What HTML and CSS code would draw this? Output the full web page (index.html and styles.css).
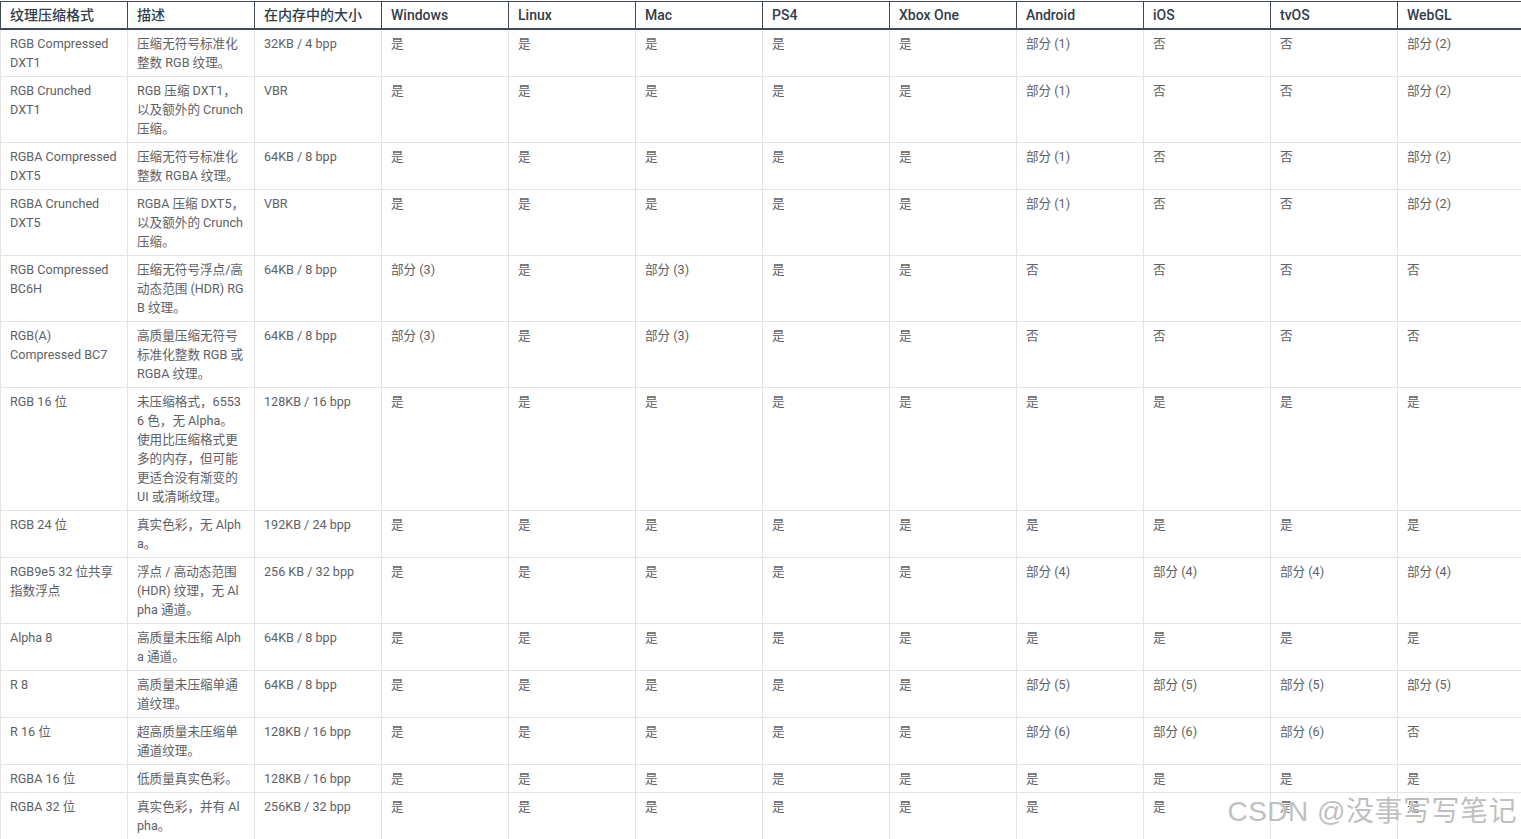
FILE: index.html
```html
<!DOCTYPE html>
<html lang="zh-CN">
<head>
<meta charset="utf-8">
<title>纹理压缩格式</title>
<link rel="stylesheet" href="styles.css">
</head>
<body>
<div class="page">
<table class="fmt">
<colgroup>
<col class="c"><col class="c"><col class="c"><col class="c"><col class="c"><col class="c"><col class="c"><col class="c"><col class="c"><col class="c"><col class="c"><col class="c">
</colgroup>
<thead>
<tr><th>纹理压缩格式</th><th>描述</th><th>在内存中的大小</th><th>Windows</th><th>Linux</th><th>Mac</th><th>PS4</th><th>Xbox One</th><th>Android</th><th>iOS</th><th>tvOS</th><th>WebGL</th></tr>
</thead>
<tbody>
<tr><td>RGB Compressed DXT1</td><td class="d">压缩无符号标准化整数 RGB 纹理。</td><td>32KB / 4 bpp</td><td>是</td><td>是</td><td>是</td><td>是</td><td>是</td><td>部分 (1)</td><td>否</td><td>否</td><td>部分 (2)</td></tr>
<tr><td>RGB Crunched DXT1</td><td class="d">RGB 压缩 DXT1，以及额外的 Crunch 压缩。</td><td>VBR</td><td>是</td><td>是</td><td>是</td><td>是</td><td>是</td><td>部分 (1)</td><td>否</td><td>否</td><td>部分 (2)</td></tr>
<tr><td>RGBA Compressed DXT5</td><td class="d">压缩无符号标准化整数 RGBA 纹理。</td><td>64KB / 8 bpp</td><td>是</td><td>是</td><td>是</td><td>是</td><td>是</td><td>部分 (1)</td><td>否</td><td>否</td><td>部分 (2)</td></tr>
<tr><td>RGBA Crunched DXT5</td><td class="d">RGBA 压缩 DXT5，以及额外的 Crunch 压缩。</td><td>VBR</td><td>是</td><td>是</td><td>是</td><td>是</td><td>是</td><td>部分 (1)</td><td>否</td><td>否</td><td>部分 (2)</td></tr>
<tr><td>RGB Compressed BC6H</td><td class="d">压缩无符号浮点/高动态范围 (HDR) RGB 纹理。</td><td>64KB / 8 bpp</td><td>部分 (3)</td><td>是</td><td>部分 (3)</td><td>是</td><td>是</td><td>否</td><td>否</td><td>否</td><td>否</td></tr>
<tr><td>RGB(A) Compressed BC7</td><td class="d">高质量压缩无符号标准化整数 RGB 或 RGBA 纹理。</td><td>64KB / 8 bpp</td><td>部分 (3)</td><td>是</td><td>部分 (3)</td><td>是</td><td>是</td><td>否</td><td>否</td><td>否</td><td>否</td></tr>
<tr><td>RGB 16 位</td><td class="d">未压缩格式，65536 色，无 Alpha。使用比压缩格式更多的内存，但可能更适合没有渐变的 UI 或清晰纹理。</td><td>128KB / 16 bpp</td><td>是</td><td>是</td><td>是</td><td>是</td><td>是</td><td>是</td><td>是</td><td>是</td><td>是</td></tr>
<tr><td>RGB 24 位</td><td class="d">真实色彩，无 Alpha。</td><td>192KB / 24 bpp</td><td>是</td><td>是</td><td>是</td><td>是</td><td>是</td><td>是</td><td>是</td><td>是</td><td>是</td></tr>
<tr><td>RGB9e5 32 位共享指数浮点</td><td class="d">浮点 / 高动态范围 (HDR) 纹理，无 Alpha 通道。</td><td>256 KB / 32 bpp</td><td>是</td><td>是</td><td>是</td><td>是</td><td>是</td><td>部分 (4)</td><td>部分 (4)</td><td>部分 (4)</td><td>部分 (4)</td></tr>
<tr><td>Alpha 8</td><td class="d">高质量未压缩 Alpha 通道。</td><td>64KB / 8 bpp</td><td>是</td><td>是</td><td>是</td><td>是</td><td>是</td><td>是</td><td>是</td><td>是</td><td>是</td></tr>
<tr><td>R 8</td><td class="d">高质量未压缩单通道纹理。</td><td>64KB / 8 bpp</td><td>是</td><td>是</td><td>是</td><td>是</td><td>是</td><td>部分 (5)</td><td>部分 (5)</td><td>部分 (5)</td><td>部分 (5)</td></tr>
<tr><td>R 16 位</td><td class="d">超高质量未压缩单通道纹理。</td><td>128KB / 16 bpp</td><td>是</td><td>是</td><td>是</td><td>是</td><td>是</td><td>部分 (6)</td><td>部分 (6)</td><td>部分 (6)</td><td>否</td></tr>
<tr><td>RGBA 16 位</td><td class="d">低质量真实色彩。</td><td>128KB / 16 bpp</td><td>是</td><td>是</td><td>是</td><td>是</td><td>是</td><td>是</td><td>是</td><td>是</td><td>是</td></tr>
<tr><td>RGBA 32 位</td><td class="d">真实色彩，并有 Alpha。</td><td>256KB / 32 bpp</td><td>是</td><td>是</td><td>是</td><td>是</td><td>是</td><td>是</td><td>是</td><td>是</td><td>是</td></tr>
</tbody>
</table>
<div class="watermark">CSDN @没事写写笔记</div>
</div>
</body>
</html>
```
FILE: styles.css
```css
html, body {
  margin: 0;
  padding: 0;
  background: #fff;
  overflow: hidden;
}
.page {
  position: relative;
  width: 1521px;
  height: 839px;
  overflow: hidden;
  padding-top: 1px;
  box-sizing: border-box;
}
.fmt {
  border-collapse: collapse;
  table-layout: fixed;
  width: 1524px;
  font-family: Roboto, "Noto Sans CJK SC", sans-serif;
  font-size: 12.6px;
  line-height: 19px;
  color: #5e6166;
}
.fmt col.c {
  width: 127px;
}
.fmt th {
  text-align: left;
  font-weight: 500;
  font-size: 14px;
  color: #323c4b;
  padding: 4px 9px 3px;
  border-top: 1px solid #3f4a5a;
  border-bottom: 2px solid #3f4a5a;
  border-left: 1px solid #3f4a5a;
  border-right: 1px solid #3f4a5a;
}
.fmt td {
  vertical-align: top;
  text-align: left;
  padding: 4px 9px;
  border: 1px solid #e4e4e4;
  border-top: none;
}
.fmt td.d {
  word-break: break-all;
}
.watermark {
  position: absolute;
  right: 4px;
  bottom: 9px;
  font-family: "Liberation Sans", "Noto Sans CJK SC", sans-serif;
  font-size: 28px;
  line-height: 36px;
  color: rgba(180, 180, 180, 0.85);
  text-shadow: 0 0 2px #fff, 0 0 1px #fff;
  letter-spacing: 0.5px;
}
```
